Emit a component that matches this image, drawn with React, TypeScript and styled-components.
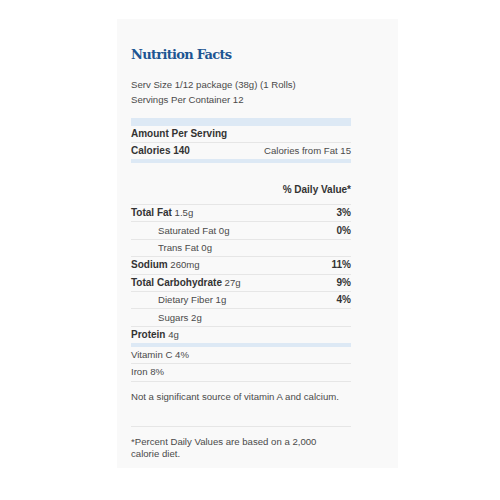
import React from "react";
import styled, { createGlobalStyle } from "styled-components";

const GlobalStyle = createGlobalStyle`
  html, body {
    margin: 0;
    padding: 0;
    background: #ffffff;
  }
  body {
    font-family: "Liberation Sans", Arial, sans-serif;
  }
`;

type Nutrient = {
  label: string;
  amount?: string;
  dv?: string;
  bold?: boolean;
  indent?: boolean;
};

const nutrients: Nutrient[] = [
  { label: "Total Fat", amount: "1.5g", dv: "3%", bold: true },
  { label: "Saturated Fat 0g", dv: "0%", indent: true },
  { label: "Trans Fat 0g", indent: true },
  { label: "Sodium", amount: "260mg", dv: "11%", bold: true },
  { label: "Total Carbohydrate", amount: "27g", dv: "9%", bold: true },
  { label: "Dietary Fiber 1g", dv: "4%", indent: true },
  { label: "Sugars 2g", indent: true },
  { label: "Protein", amount: "4g", bold: true },
];

const vitamins = ["Vitamin C 4%", "Iron 8%"];

const App = () => {
  return (
    <>
      <GlobalStyle />
      <Panel>
        <Title>Nutrition Facts</Title>
        <Serving>
          Serv Size 1/12 package (38g) (1 Rolls)
          <br />
          Servings Per Container 12
        </Serving>
        <Bar $height={8} />
        <Row $tall={false}>
          <Strong>Amount Per Serving</Strong>
        </Row>
        <Row $tall={false} $last>
          <Strong>Calories 140</Strong>
          <span>Calories from Fat 15</span>
        </Row>
        <Bar $height={4} />
        <DVHeader>% Daily Value*</DVHeader>
        {nutrients.map((n, i) => (
          <Row key={n.label} $indent={n.indent} $last={i === nutrients.length - 1}>
            <span>
              {n.bold ? <Strong>{n.label}</Strong> : n.label}
              {n.amount && <> {n.amount}</>}
            </span>
            {n.dv && <Strong>{n.dv}</Strong>}
          </Row>
        ))}
        <Bar $height={4} />
        {vitamins.map((v) => (
          <Row key={v}>
            <span>{v}</span>
          </Row>
        ))}
        <Note>Not a significant source of vitamin A and calcium.</Note>
        <Footnote>
          *Percent Daily Values are based on a 2,000
          <br />
          calorie diet.
        </Footnote>
      </Panel>
    </>
  );
};

export default App;

const Panel = styled.div`
  margin: 19px 0 0 117px;
  width: 281px;
  box-sizing: border-box;
  padding: 28px 47px 8px 14px;
  background: #f9f9f9;
  color: #4a4a4a;
  font-size: 9.6px;
`;

const Title = styled.h1`
  margin: 0;
  font-family: "DejaVu Serif", "Liberation Serif", serif;
  font-weight: bold;
  font-size: 13px;
  line-height: 16px;
  letter-spacing: -0.7px;
  color: #1d5592;
`;

const Serving = styled.div`
  margin: 14px 0 11px;
  line-height: 15px;
`;

const Bar = styled.div<{ $height: number }>`
  height: ${({ $height }) => $height}px;
  background: #dde9f5;
`;

const Row = styled.div<{ $indent?: boolean; $last?: boolean; $tall?: boolean }>`
  display: flex;
  justify-content: space-between;
  align-items: center;
  box-sizing: border-box;
  height: ${({ $tall = true, $last }) => ($last ? 16 : $tall ? 17.4 : 17)}px;
  padding-left: ${({ $indent }) => ($indent ? 27 : 0)}px;
  border-bottom: ${({ $last }) => ($last ? "none" : "1px solid #e6e6e6")};
  line-height: 16px;
`;

const Strong = styled.span`
  font-weight: bold;
  font-size: 10px;
  color: #333;
`;

const DVHeader = styled.div`
  padding: 18px 0 6px;
  border-bottom: 1px solid #e6e6e6;
  line-height: 17px;
  text-align: right;
  font-weight: bold;
  font-size: 10px;
  color: #333;
`;

const Note = styled.div`
  padding: 7px 0 22px;
  line-height: 15px;
  border-bottom: 1px solid #e6e6e6;
`;

const Footnote = styled.div`
  padding-top: 9px;
  line-height: 12px;
`;
